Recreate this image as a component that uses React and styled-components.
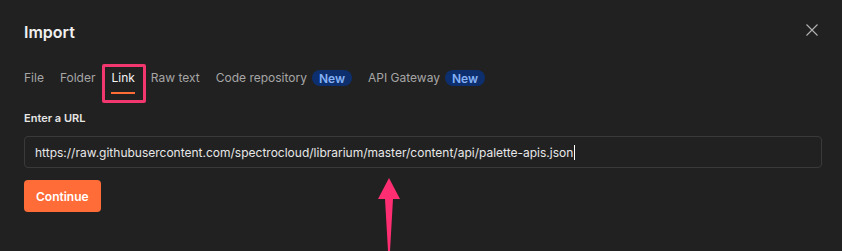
import React from "react";
import styled, { createGlobalStyle } from "styled-components";

const GlobalStyle = createGlobalStyle`
  html, body {
    margin: 0;
    padding: 0;
    background: #212121;
  }
  body {
    font-family: Inter, "Noto Sans", sans-serif;
    -webkit-font-smoothing: antialiased;
  }
`;

const tabs = [
  { label: "File" },
  { label: "Folder" },
  { label: "Link", active: true, marked: true },
  { label: "Raw text" },
  { label: "Code repository", badge: "New" },
  { label: "API Gateway", badge: "New" },
];

function App() {
  return (
    <>
      <GlobalStyle />
      <Dialog>
        <Header>
          <Title>Import</Title>
          <CloseButton aria-label="Close">
            <svg width="12" height="12" viewBox="0 0 12 12">
              <path d="M0.5 0.5 L11.5 11.5 M11.5 0.5 L0.5 11.5" stroke="#b3b3b3" strokeWidth="1.1" />
            </svg>
          </CloseButton>
        </Header>

        <TabBar>
          {tabs.map((t) => (
            <Tab key={t.label} $active={t.active} $marked={t.marked}>
              <TabLabel $active={t.active}>{t.label}</TabLabel>
              {t.badge && <Badge>{t.badge}</Badge>}
            </Tab>
          ))}
        </TabBar>

        <Label>Enter a URL</Label>
        <UrlField>
          https://raw.githubusercontent.com/spectrocloud/librarium/master/content/api/palette-apis.json
          <Caret />
        </UrlField>
        <ContinueButton>Continue</ContinueButton>

        <Arrow width="24" height="74" viewBox="0 0 24 74">
          <path d="M13 0 L24 21 L17 21 L14 73 L12 73 L9 21 L2 21 Z" fill="#ff2d72" />
        </Arrow>
      </Dialog>
    </>
  );
}

export default App;

// ================= STYLED COMPONENTS =================

const Dialog = styled.div`
  position: relative;
  width: 842px;
  height: 251px;
  box-sizing: border-box;
  padding: 20px 20px 0 24px;
  overflow: hidden;
  color: #ffffff;
`;

const Header = styled.div`
  display: flex;
  align-items: center;
  justify-content: space-between;
  height: 24px;
`;

const Title = styled.h1`
  margin: 0;
  font-size: 16px;
  line-height: 24px;
  font-weight: 600;
  color: #f0f0f0;
`;

const CloseButton = styled.button`
  display: flex;
  align-items: center;
  justify-content: center;
  width: 16px;
  height: 16px;
  padding: 0;
  margin: 0 2px 4px 0;
  background: none;
  border: none;
`;

const TabBar = styled.div`
  display: flex;
  gap: 16px;
  margin-top: 26px;
  height: 24px;
`;

const Tab = styled.div`
  position: relative;
  display: flex;
  align-items: flex-start;
  gap: 5px;
  height: 24px;

  ${(p) =>
    p.$marked &&
    `
    &::after {
      content: "";
      position: absolute;
      left: -9px;
      right: -11px;
      top: -6px;
      bottom: -9px;
      border: 3px solid #f2376f;
      border-radius: 2px;
    }
  `}
`;

const TabLabel = styled.span`
  position: relative;
  font-size: 12px;
  line-height: 16px;
  color: ${(p) => (p.$active ? "#f5f5f5" : "#a6a6a6")};

  ${(p) =>
    p.$active &&
    `
    &::after {
      content: "";
      position: absolute;
      left: 0;
      right: 0;
      top: 22px;
      height: 2px;
      background: #ff6c37;
    }
  `}
`;

const Badge = styled.span`
  display: inline-flex;
  align-items: center;
  height: 16px;
  padding: 0 7px;
  border-radius: 8px;
  background: #0d2f6e;
  color: #86b2f6;
  font-size: 12px;
  font-weight: 600;
`;

const Label = styled.div`
  margin-top: 16px;
  font-size: 11px;
  line-height: 16px;
  font-weight: 600;
  color: #e6e6e6;
`;

const UrlField = styled.div`
  display: flex;
  align-items: center;
  margin-top: 10px;
  height: 32px;
  box-sizing: border-box;
  padding: 0 10px;
  border: 1px solid #3a3a3a;
  border-radius: 4px;
  font-size: 12px;
  color: #e8e8e8;
  white-space: nowrap;
`;

const Caret = styled.span`
  display: inline-block;
  width: 1px;
  height: 15px;
  margin-left: 1px;
  background: #ffffff;
`;

const ContinueButton = styled.button`
  margin-top: 12px;
  height: 32px;
  padding: 0 12px;
  border: none;
  border-radius: 4px;
  background: #ff6c37;
  color: #ffffff;
  font-family: Inter, "Noto Sans", sans-serif;
  font-size: 12px;
  font-weight: 600;
`;

const Arrow = styled.svg`
  position: absolute;
  left: 376px;
  top: 178px;
`;
